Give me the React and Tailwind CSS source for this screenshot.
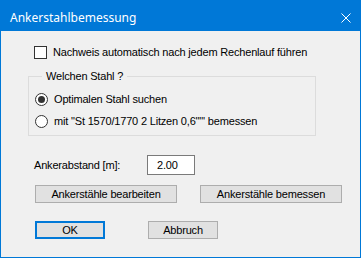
import React, { useState } from "react";

const font = { fontFamily: '"Liberation Sans", Arial, sans-serif' };

function Radio({ checked, onClick, children }) {
  return (
    <div className="flex items-center h-[13px] cursor-default" onClick={onClick}>
      <div className="w-[13px] h-[13px] rounded-full border border-[#333333] bg-white flex items-center justify-center">
        {checked && <div className="w-[7px] h-[7px] rounded-full bg-[#333333]" />}
      </div>
      <span className="ml-[6px] text-[11px] leading-[13px] text-black">{children}</span>
    </div>
  );
}

function Button({ children, className = "", isDefault = false }) {
  return (
    <button
      className={
        "h-[18px] bg-[#e1e1e1] text-[11px] leading-none text-black flex items-center justify-center " +
        (isDefault ? "border-2 border-[#0078d7] " : "border border-[#adadad] ") +
        className
      }
    >
      {children}
    </button>
  );
}

export default function App() {
  const [auto, setAuto] = useState(false);
  const [stahl, setStahl] = useState("opt");
  const [abstand, setAbstand] = useState("2.00");

  return (
    <div
      className="w-[361px] h-[258px] flex flex-col bg-[#f0f0f0] border border-[#0078d7] overflow-hidden"
      style={font}
    >
      <div className="h-[30px] shrink-0 bg-[#0078d7] flex items-center pl-[9px] pr-[9px]">
        <span
          className="text-white text-[12px] pt-[3px]"
          style={{ fontFamily: '"Noto Sans", "Liberation Sans", sans-serif' }}
        >
          Ankerstahlbemessung
        </span>
        <svg className="ml-auto mt-[3px]" width="10" height="10" viewBox="0 0 10 10">
          <path d="M0.5 0.5 L9.5 9.5 M9.5 0.5 L0.5 9.5" stroke="white" strokeWidth="1" fill="none" />
        </svg>
      </div>

      <div className="flex flex-col pl-[27px] text-black tracking-[-0.18px]">
        <div
          className="mt-[15px] ml-[6px] flex items-center h-[13px] cursor-default"
          onClick={() => setAuto(!auto)}
        >
          <div className="w-[13px] h-[13px] border border-[#333333] bg-white flex items-center justify-center">
            {auto && (
              <svg width="9" height="9" viewBox="0 0 9 9">
                <path d="M1 4.5 L3.5 7 L8 1.5" stroke="#333" strokeWidth="1.5" fill="none" />
              </svg>
            )}
          </div>
          <span className="ml-[6px] text-[11px] leading-[13px]">
            Nachweis automatisch nach jedem Rechenlauf führen
          </span>
        </div>

        <fieldset className="mt-[11px] w-[288px] border border-[#dcdcdc] pl-[6px] pb-[7px]">
          <legend className="ml-[7px] px-[4px] text-[11px] leading-[13px]">Welchen Stahl ?</legend>
          <div className="mt-[10px] flex flex-col gap-[9px]">
            <Radio checked={stahl === "opt"} onClick={() => setStahl("opt")}>
              Optimalen Stahl suchen
            </Radio>
            <Radio checked={stahl === "st"} onClick={() => setStahl("st")}>
              mit "St 1570/1770 2 Litzen 0,6""' bemessen
            </Radio>
          </div>
        </fieldset>

        <div className="mt-[19px] ml-[6px] flex items-center h-[20px]">
          <span className="w-[113px] text-[11px] leading-[13px]">Ankerabstand [m]:</span>
          <input
            value={abstand}
            onChange={(e) => setAbstand(e.target.value)}
            className="w-[48px] h-[20px] border border-[#7a7a7a] bg-white pl-[9px] text-[11px] text-black outline-none"
            style={font}
          />
        </div>

        <div className="mt-[10px] ml-[7px] flex gap-[23px]">
          <Button className="w-[142px]">Ankerstähle bearbeiten</Button>
          <Button className="w-[142px]">Ankerstähle bemessen</Button>
        </div>

        <div className="mt-[18px] ml-[7px] flex gap-[43px]">
          <Button className="w-[70px]" isDefault>OK</Button>
          <Button className="w-[70px]">Abbruch</Button>
        </div>
      </div>
    </div>
  );
}
